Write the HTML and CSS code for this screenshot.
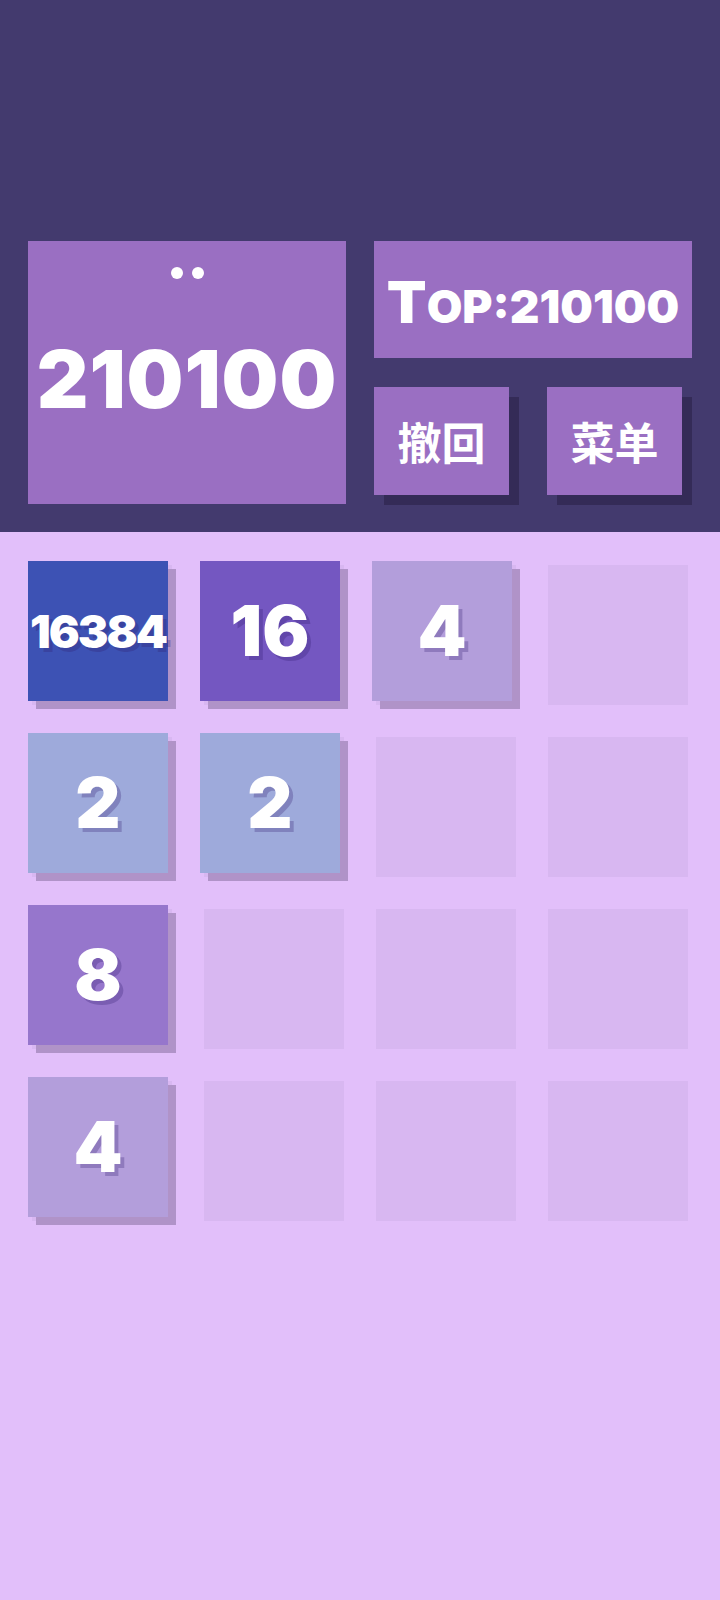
FILE: index.html
```html
<!DOCTYPE html>
<html lang="zh">
<head>
<meta charset="utf-8">
<title>2048</title>
<link rel="stylesheet" href="styles.css">
</head>
<body>
<div class="app">
  <header class="header">
    <div class="score-box">
      <div class="dots"><span class="dot"></span><span class="dot"></span></div>
      <div class="score">210100</div>
    </div>
    <div class="side">
      <div class="best"><span class="best-cap">T</span><span class="best-rest">op:210100</span></div>
      <div class="buttons">
        <div class="btn">撤回</div>
        <div class="btn">菜单</div>
      </div>
    </div>
  </header>
  <main class="board">
    <div class="slot"><div class="tile t16384 small">16384</div></div>
    <div class="slot"><div class="tile t16">16</div></div>
    <div class="slot"><div class="tile t4">4</div></div>
    <div class="slot"></div>

    <div class="slot"><div class="tile t2">2</div></div>
    <div class="slot"><div class="tile t2">2</div></div>
    <div class="slot"></div>
    <div class="slot"></div>

    <div class="slot"><div class="tile t8">8</div></div>
    <div class="slot"></div>
    <div class="slot"></div>
    <div class="slot"></div>

    <div class="slot"><div class="tile t4">4</div></div>
    <div class="slot"></div>
    <div class="slot"></div>
    <div class="slot"></div>
  </main>
</div>
</body>
</html>
```

FILE: styles.css
```css
* { box-sizing: border-box; }
html, body {
  margin: 0;
  padding: 0;
  background: #e2bffa;
}
body {
  width: 720px;
  min-height: 1600px;
  font-family: Inter, "Noto Sans", "Noto Sans CJK SC", sans-serif;
  color: #ffffff;
}
.app {
  display: flex;
  flex-direction: column;
}
.header {
  background: #433a6e;
  height: 532px;
  padding: 241px 28px 0 28px;
  display: flex;
  gap: 28px;
}
.score-box {
  width: 318px;
  height: 263px;
  background: #9a6fc2;
  display: flex;
  flex-direction: column;
  align-items: center;
  padding-top: 26px;
}
.dots {
  display: flex;
  gap: 9px;
  height: 12px;
}
.dot {
  width: 12px;
  height: 12px;
  border-radius: 50%;
  background: #ffffff;
}
.score {
  margin-top: 60px;
  font-size: 80px;
  line-height: 80px;
  font-weight: 900;
  letter-spacing: 1px;
}
.side {
  width: 318px;
  display: flex;
  flex-direction: column;
}
.best {
  height: 117px;
  background: #9a6fc2;
  display: flex;
  align-items: baseline;
  justify-content: center;
  padding-top: 32px;
  font-weight: 900;
  line-height: 1;
}
.best-cap {
  font-size: 58px;
}
.best-rest {
  font-size: 46px;
  text-transform: uppercase;
}
.buttons {
  margin-top: 29px;
  display: flex;
  gap: 38px;
}
.btn {
  width: 135px;
  height: 108px;
  background: #9a6fc2;
  box-shadow: 10px 10px 0 #342b57;
  display: flex;
  align-items: center;
  justify-content: center;
  font-family: "Noto Sans CJK SC", sans-serif;
  font-weight: 700;
  font-size: 44px;
}
.board {
  padding: 33px 32px 0 32px;
  display: grid;
  grid-template-columns: repeat(4, 140px);
  grid-auto-rows: 140px;
  gap: 32px;
}
.slot {
  background: #d8b7f1;
}
.tile {
  width: 140px;
  height: 140px;
  transform: translate(-4px, -4px);
  box-shadow: 8px 8px 0 #b093c8;
  display: flex;
  align-items: center;
  justify-content: center;
  font-weight: 900;
  font-size: 70px;
  line-height: 1;
  text-shadow: 4px 4px 0 rgba(50, 30, 110, 0.28);
}
.tile.small {
  font-size: 46px;
  letter-spacing: -2px;
}
.t16384 { background: #3d52b4; }
.t16 { background: #7457c1; }
.t4 { background: #b39edb; }
.t2 { background: #9eaadb; }
.t8 { background: #9676cc; }
```
